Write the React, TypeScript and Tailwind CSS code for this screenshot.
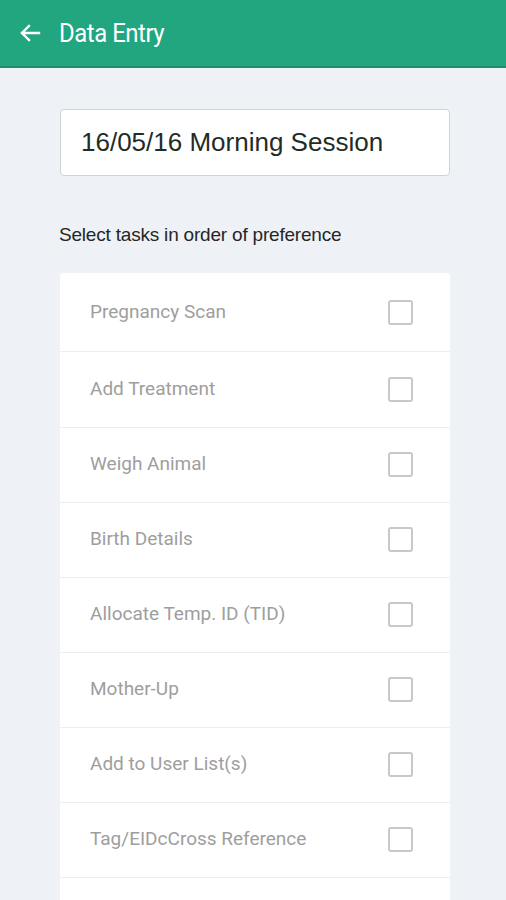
import { useState } from "react";

const tasks = [
  "Pregnancy Scan",
  "Add Treatment",
  "Weigh Animal",
  "Birth Details",
  "Allocate Temp. ID (TID)",
  "Mother-Up",
  "Add to User List(s)",
  "Tag/EIDcCross Reference",
];

const rowHeights = ["h-[79px] pt-[2px]", "h-[76px]"];

function BackArrow() {
  return (
    <svg width="24" height="24" viewBox="0 0 24 24" fill="none" aria-hidden="true">
      <path
        d="M21 12H4M11 5l-7 7 7 7"
        stroke="#fff"
        strokeWidth="2.4"
        strokeLinecap="square"
      />
    </svg>
  );
}

export default function App() {
  const [checked, setChecked] = useState<Record<number, boolean>>({});

  return (
    <div className="w-[506px] h-[900px] overflow-hidden bg-[#eef2f6] font-['Roboto',_sans-serif]">
      {/* Toolbar */}
      <div className="h-[68px] bg-[#21a67f] border-b-2 border-[#1b8f6c] flex items-center pl-[18px]">
        <BackArrow />
        <span className="ml-[17px] text-[26px] text-white tracking-[-0.5px] scale-x-[0.92] origin-left">
          Data Entry
        </span>
      </div>

      <div className="pl-[60px] pr-[56px] pt-[41px]">
        {/* Session name */}
        <div className="h-[67px] bg-white border border-[#cfd3d6] rounded-[4px] flex items-center pl-[20px] text-[26px] text-[#1f2d27] font-['Liberation_Sans',_sans-serif]">
          16/05/16 Morning Session
        </div>

        <div className="mt-[45px] -ml-px text-[19px] text-[#262626] tracking-[-0.2px] font-['Liberation_Sans',_sans-serif]">
          Select tasks in order of preference
        </div>

        {/* Task list */}
        <div className="mt-[23px] bg-white rounded-t-[3px]">
          {tasks.map((t, i) => (
            <div
              key={t}
              onClick={() => setChecked({ ...checked, [i]: !checked[i] })}
              className={`flex items-center justify-between pl-[30px] pr-[37px] border-b border-[#eceef0] ${
                rowHeights[i] ?? "h-[75px]"
              }`}
            >
              <span className="text-[19px] text-[#9e9e9e]">{t}</span>
              <span
                className={`w-[25px] h-[25px] rounded-[3px] border-2 ${
                  checked[i] ? "bg-[#21a67f] border-[#21a67f]" : "border-[#c8c8c8]"
                }`}
              />
            </div>
          ))}
          <div className="h-[75px]" />
        </div>
      </div>
    </div>
  );
}
